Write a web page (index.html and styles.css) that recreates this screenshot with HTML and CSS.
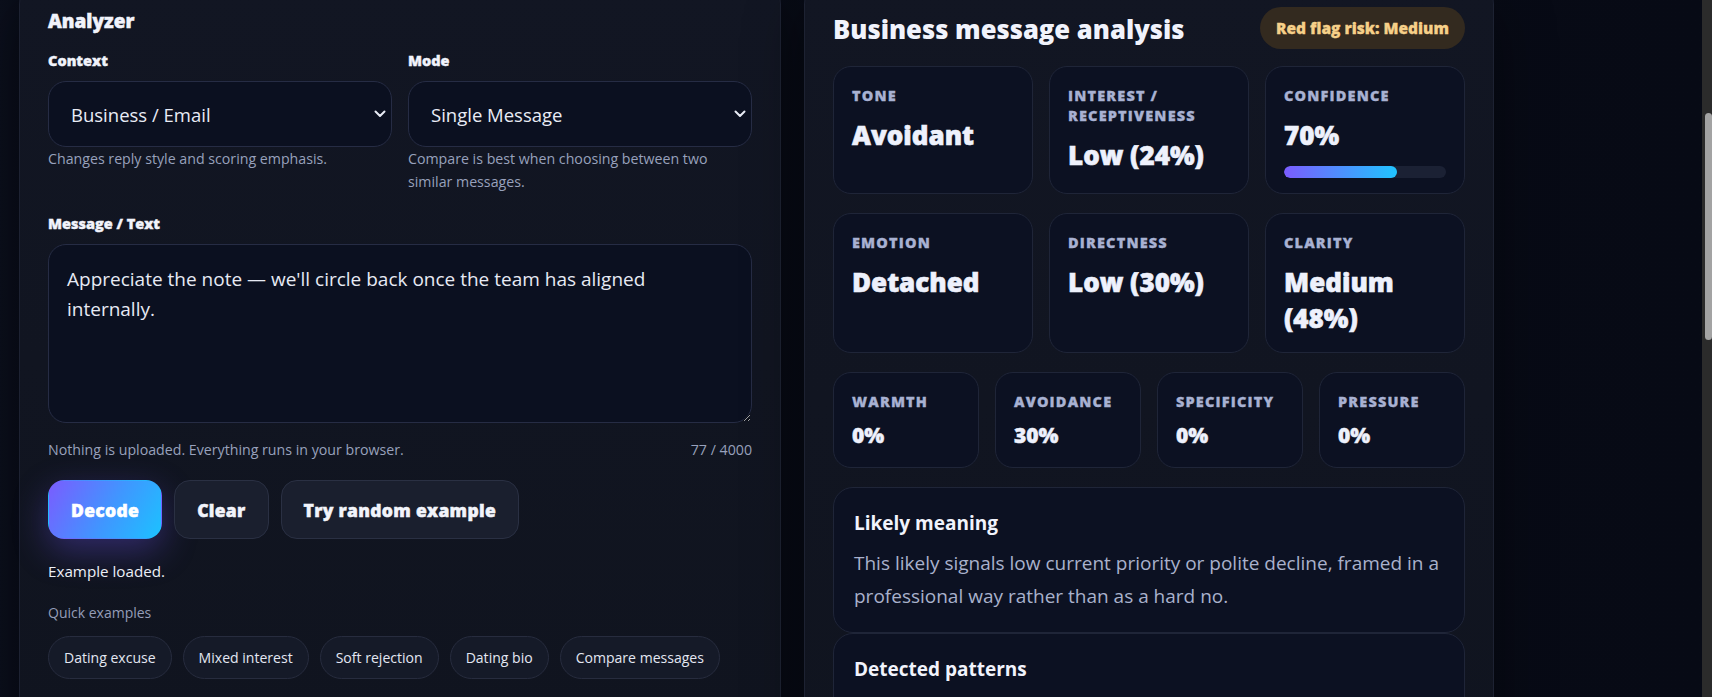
FILE: index.html
```html
<!DOCTYPE html>
<html lang="en">
<head>
<meta charset="utf-8">
<title>Message Decoder</title>
<link rel="stylesheet" href="styles.css">
</head>
<body>
<div class="page">
  <section class="panel analyzer">
    <h2 class="panel-title">Analyzer</h2>
    <div class="field-row">
      <div class="field">
        <label class="field-label" for="ctx">Context</label>
        <div class="select-wrap">
          <select id="ctx" class="select"><option>Business / Email</option></select>
          <svg class="chev" width="12" height="8" viewBox="0 0 12 8"><polyline points="1.5,1.5 6,6 10.5,1.5"/></svg>
        </div>
        <p class="hint">Changes reply style and scoring emphasis.</p>
      </div>
      <div class="field">
        <label class="field-label" for="mode">Mode</label>
        <div class="select-wrap">
          <select id="mode" class="select"><option>Single Message</option></select>
          <svg class="chev" width="12" height="8" viewBox="0 0 12 8"><polyline points="1.5,1.5 6,6 10.5,1.5"/></svg>
        </div>
        <p class="hint">Compare is best when choosing between two similar messages.</p>
      </div>
    </div>
    <label class="field-label" for="msg">Message / Text</label>
    <textarea id="msg" class="textarea">Appreciate the note — we'll circle back once the team has aligned internally.</textarea>
    <div class="meta"><span>Nothing is uploaded. Everything runs in your browser.</span><span>77 / 4000</span></div>
    <div class="actions">
      <button class="btn btn-primary">Decode</button>
      <button class="btn">Clear</button>
      <button class="btn">Try random example</button>
    </div>
    <p class="status">Example loaded.</p>
    <p class="quick-title">Quick examples</p>
    <div class="chips">
      <button class="chip">Dating excuse</button>
      <button class="chip">Mixed interest</button>
      <button class="chip">Soft rejection</button>
      <button class="chip">Dating bio</button>
      <button class="chip">Compare messages</button>
    </div>
  </section>

  <section class="panel results">
    <div class="results-head">
      <h2 class="results-title">Business message analysis</h2>
      <span class="risk-pill">Red flag risk: Medium</span>
    </div>
    <div class="results-body">
      <div class="metric-grid cols-3">
        <div class="metric"><div class="metric-label">Tone</div><div class="metric-value">Avoidant</div></div>
        <div class="metric"><div class="metric-label">Interest / Receptiveness</div><div class="metric-value">Low (24%)</div></div>
        <div class="metric"><div class="metric-label">Confidence</div><div class="metric-value">70%</div><div class="progress"><div class="progress-fill" style="width:70%"></div></div></div>
      </div>
      <div class="metric-grid cols-3">
        <div class="metric"><div class="metric-label">Emotion</div><div class="metric-value">Detached</div></div>
        <div class="metric"><div class="metric-label">Directness</div><div class="metric-value">Low (30%)</div></div>
        <div class="metric"><div class="metric-label">Clarity</div><div class="metric-value">Medium (48%)</div></div>
      </div>
      <div class="metric-grid cols-4">
        <div class="metric"><div class="metric-label">Warmth</div><div class="metric-value small">0%</div></div>
        <div class="metric"><div class="metric-label">Avoidance</div><div class="metric-value small">30%</div></div>
        <div class="metric"><div class="metric-label">Specificity</div><div class="metric-value small">0%</div></div>
        <div class="metric"><div class="metric-label">Pressure</div><div class="metric-value small">0%</div></div>
      </div>
      <div class="notes">
        <div class="note">
          <h3 class="note-title">Likely meaning</h3>
          <p class="note-text">This likely signals low current priority or polite decline, framed in a professional way rather than as a hard no.</p>
        </div>
        <div class="note note-tall">
          <h3 class="note-title">Detected patterns</h3>
        </div>
      </div>
    </div>
  </section>
</div>
<div class="scrollbar"><div class="scrollbar-thumb"></div></div>
</body>
</html>
```

FILE: styles.css
```css
* { box-sizing: border-box; }

html, body {
  margin: 0;
  height: 100%;
}

body {
  background: #080b16;
  background-image: linear-gradient(90deg, #0b0f1c 0px, #090d19 20px, #080b16 60%, #070a15 100%);
  font-family: "Open Sans", "Noto Sans", sans-serif;
  color: #eef1fa;
  overflow: hidden;
}

.page {
  display: grid;
  grid-template-columns: 762px 690px;
  column-gap: 23px;
  align-items: start;
  padding-left: 19px;
  margin-top: -20px;
}

.panel {
  background: linear-gradient(180deg, #121623 0%, #10141f 100%);
  border: 1px solid #1d2232;
  border-radius: 24px;
  padding: 28px;
  box-shadow: 0 24px 60px rgba(0, 0, 0, 0.4);
}

.results {
  padding-top: 26px;
  min-height: 800px;
}

/* ---------- Analyzer ---------- */
.panel-title {
  margin: 0 0 18px;
  font-size: 19px;
  line-height: 24px;
  font-weight: 800;
  color: #f1f3fb;
  -webkit-text-stroke: 0.5px currentColor;
}

.field-row {
  display: grid;
  grid-template-columns: 1fr 1fr;
  column-gap: 16px;
  margin-bottom: 21px;
}

.field-label {
  display: block;
  margin-bottom: 10px;
  font-size: 14.5px;
  line-height: 20px;
  font-weight: 800;
  color: #f1f3fb;
  -webkit-text-stroke: 0.4px currentColor;
}

.select-wrap {
  position: relative;
}

.select {
  display: block;
  width: 100%;
  height: 66px;
  margin: 0;
  padding: 0 40px 0 22px;
  border: 1px solid #262c44;
  border-radius: 18px;
  background: #0b1020;
  color: #e9ecf6;
  font-family: inherit;
  font-size: 18.5px;
  -webkit-appearance: none;
  appearance: none;
}

.chev {
  position: absolute;
  right: 6px;
  top: 29px;
  fill: none;
  stroke: #e8ebf5;
  stroke-width: 2;
  stroke-linecap: round;
  stroke-linejoin: round;
}

.hint {
  margin: 0;
  font-size: 14.2px;
  line-height: 23px;
  color: #98a1bc;
}

.textarea {
  display: block;
  width: 100%;
  height: 179px;
  margin: 0;
  padding: 18.5px 18px;
  border: 1px solid #262c44;
  border-radius: 18px;
  background: #0b1020;
  color: #e7eaf4;
  font-family: inherit;
  font-size: 19px;
  line-height: 30.5px;
  resize: vertical;
}

.meta {
  display: flex;
  justify-content: space-between;
  margin-top: 17px;
  font-size: 14.2px;
  line-height: 20px;
  color: #98a1bc;
}

.actions {
  display: flex;
  gap: 12px;
  margin-top: 20px;
}

.btn {
  height: 59px;
  padding: 0 22px;
  border: 1px solid #2a3043;
  border-radius: 16px;
  background: #1a1f2e;
  color: #f2f4fb;
  font-family: inherit;
  font-size: 17.5px;
  font-weight: 800;
  letter-spacing: 0.3px;
  -webkit-text-stroke: 0.5px currentColor;
}

.btn-primary {
  border-color: transparent;
  background: linear-gradient(120deg, #7a5cff 0%, #3f97ff 55%, #1cc2ff 100%);
  color: #ffffff;
  box-shadow: 0 12px 34px rgba(108, 84, 240, 0.35);
}

.status {
  margin: 22px 0 0;
  font-size: 15.2px;
  line-height: 20px;
  color: #eceff7;
}

.quick-title {
  margin: 21.5px 0 0;
  font-size: 14px;
  line-height: 20px;
  color: #949db8;
}

.chips {
  display: flex;
  gap: 11px;
  margin-top: 13.5px;
  padding-bottom: 30px;
}

.chip {
  height: 43px;
  padding: 0 15px;
  border: 1px solid #272c3e;
  border-radius: 999px;
  background: #151a28;
  color: #e3e7f2;
  font-family: inherit;
  font-size: 14.05px;
}

/* ---------- Results ---------- */
.results-head {
  display: flex;
  justify-content: space-between;
  align-items: center;
  margin-bottom: 17px;
}

.results-title {
  margin: 0;
  padding-top: 3px;
  font-size: 25.6px;
  line-height: 34px;
  font-weight: 800;
  color: #f1f3fc;
}

.risk-pill {
  display: inline-flex;
  align-items: center;
  height: 42px;
  padding: 0 16px;
  border-radius: 999px;
  background: #332a1f;
  color: #f6d089;
  font-size: 15.5px;
  font-weight: 800;
  -webkit-text-stroke: 0.3px currentColor;
}

.results-body {
  display: flex;
  flex-direction: column;
  gap: 19px;
}

.metric-grid {
  display: grid;
  gap: 16px;
}

.cols-3 { grid-template-columns: repeat(3, 1fr); }
.cols-4 { grid-template-columns: repeat(4, 1fr); }

.metric {
  padding: 19px 18px 15px;
  border: 1px solid #1f2538;
  border-radius: 18px;
  background: #0c1122;
}

.cols-4 .metric {
  padding-bottom: 17px;
}

.metric-label {
  font-size: 14.5px;
  line-height: 20px;
  font-weight: 800;
  letter-spacing: 0.08em;
  text-transform: uppercase;
  color: #a8b1d2;
  -webkit-text-stroke: 0.3px currentColor;
}

.metric-value {
  margin-top: 11px;
  font-size: 26px;
  line-height: 36.5px;
  font-weight: 800;
  color: #eef1fc;
  -webkit-text-stroke: 0.6px currentColor;
}

.metric-value.small {
  margin-top: 8px;
  font-size: 21px;
  line-height: 30px;
  -webkit-text-stroke: 0.5px currentColor;
}

.progress {
  height: 12px;
  margin-top: 12px;
  border-radius: 999px;
  background: #1b2134;
  overflow: hidden;
}

.progress-fill {
  height: 100%;
  border-radius: 999px;
  background: linear-gradient(90deg, #7b5cff, #20c4ff);
}

.notes {
  display: flex;
  flex-direction: column;
}

.note {
  padding: 22px 20px 19px;
  border: 1px solid #1f2538;
  border-radius: 20px;
  background: #0c1122;
}

.note-tall {
  min-height: 160px;
}

.note-title {
  margin: 0 0 11px;
  font-size: 19px;
  line-height: 26px;
  font-weight: 700;
  color: #f1f3fc;
}

.note-text {
  margin: 0;
  font-size: 19px;
  line-height: 33px;
  color: #a9b1cc;
}

/* ---------- Scrollbar ---------- */
.scrollbar {
  position: fixed;
  top: 0;
  right: 0;
  width: 10px;
  height: 100%;
  background: #2b2b2b;
}

.scrollbar-thumb {
  margin: 113px 0 0 3px;
  width: 7px;
  height: 227px;
  border-radius: 4px;
  background: #a3a3a3;
}
```
